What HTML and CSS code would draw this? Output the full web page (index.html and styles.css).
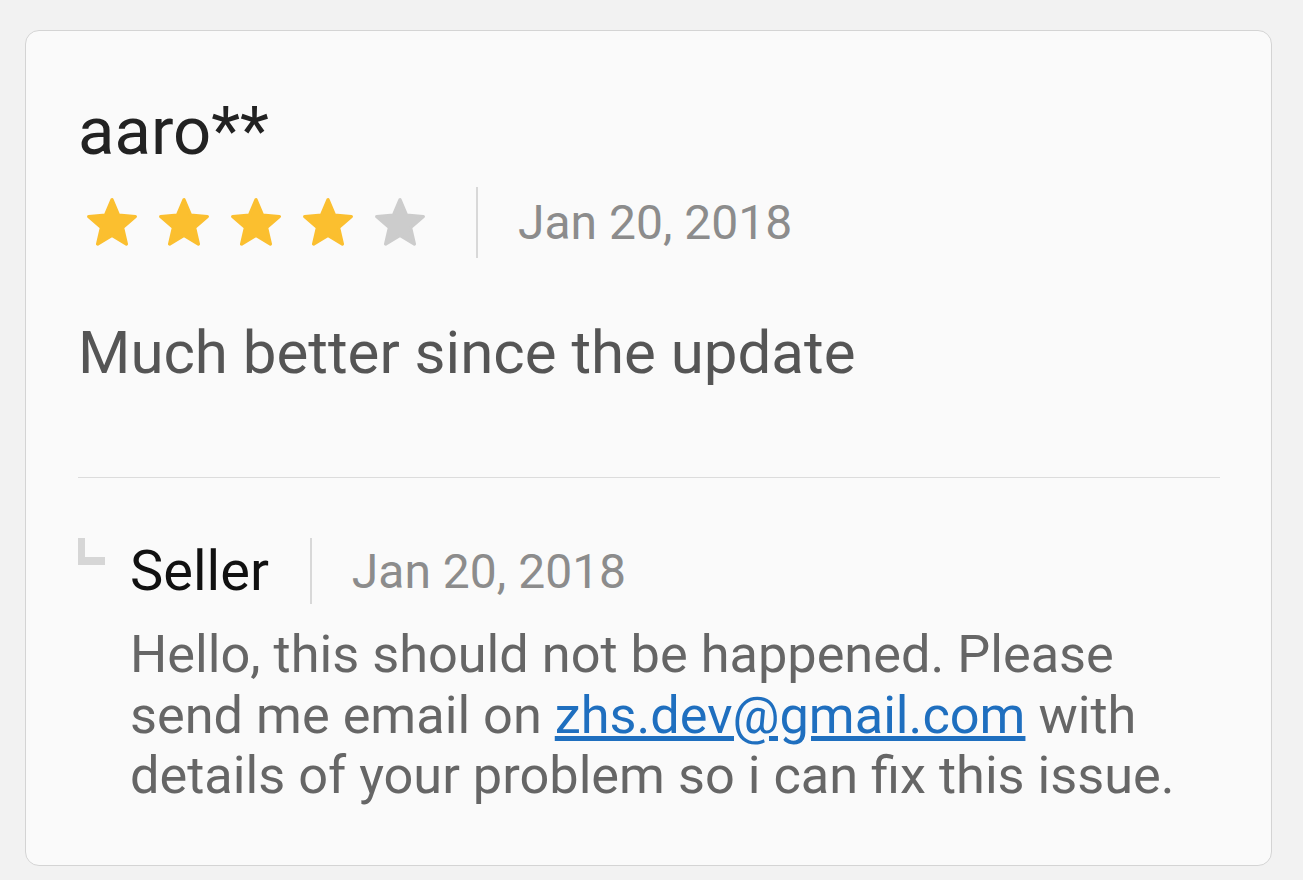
FILE: index.html
```html
<!DOCTYPE html>
<html lang="en">
<head>
    <meta charset="UTF-8">
    <meta name="viewport" content="width=device-width, initial-scale=1.0">
    <title>Review</title>
    <link rel="stylesheet" href="styles.css">
</head>
<body>

    <!-- Review card -->
    <div class="card">
        <div class="review">
            <h1 class="name">aaro**</h1>
            <div class="meta">
                <div class="stars">
                    <svg class="star on" viewBox="0 0 24 24"><path d="M12 17.27L18.18 21l-1.64-7.03L22 9.24l-7.19-.61L12 2 9.19 8.63 2 9.24l5.46 4.73L5.82 21z"/></svg>
                    <svg class="star on" viewBox="0 0 24 24"><path d="M12 17.27L18.18 21l-1.64-7.03L22 9.24l-7.19-.61L12 2 9.19 8.63 2 9.24l5.46 4.73L5.82 21z"/></svg>
                    <svg class="star on" viewBox="0 0 24 24"><path d="M12 17.27L18.18 21l-1.64-7.03L22 9.24l-7.19-.61L12 2 9.19 8.63 2 9.24l5.46 4.73L5.82 21z"/></svg>
                    <svg class="star on" viewBox="0 0 24 24"><path d="M12 17.27L18.18 21l-1.64-7.03L22 9.24l-7.19-.61L12 2 9.19 8.63 2 9.24l5.46 4.73L5.82 21z"/></svg>
                    <svg class="star" viewBox="0 0 24 24"><path d="M12 17.27L18.18 21l-1.64-7.03L22 9.24l-7.19-.61L12 2 9.19 8.63 2 9.24l5.46 4.73L5.82 21z"/></svg>
                </div>
                <span class="sep"></span>
                <span class="date">Jan 20, 2018</span>
            </div>
            <p class="body">Much better since the update</p>
        </div>

        <!-- Seller reply -->
        <div class="reply">
            <span class="reply-mark"></span>
            <div class="reply-content">
                <div class="reply-head">
                    <span class="seller">Seller</span>
                    <span class="sep small"></span>
                    <span class="date">Jan 20, 2018</span>
                </div>
                <p class="reply-text">Hello, this should not be happened. Please send me email on <a href="#">zhs.dev@gmail.com</a> with details of your problem so i can fix this issue.</p>
            </div>
        </div>
    </div>

</body>
</html>
```

FILE: styles.css
```css
/* General styles */
body {
    font-family: Roboto, "Noto Sans", sans-serif;
    margin: 0;
    padding: 30px 31px 0 25px;
    background-color: #f2f2f2;
}

.card {
    height: 836px;
    box-sizing: border-box;
    background-color: #fafafa;
    border: 1px solid #d4d4d4;
    border-radius: 14px;
    padding: 0 51px 0 52px;
}

/* Review */
.review {
    padding-top: 65px;
    padding-bottom: 89px;
    border-bottom: 1px solid #dcdcdc;
}

.name {
    margin: 0;
    font-size: 67px;
    font-weight: 400;
    line-height: 70px;
    color: #222;
}

.meta {
    display: flex;
    align-items: center;
    margin-top: 21px;
    height: 71px;
}

.stars {
    display: flex;
    gap: 16px;
    padding-left: 6px;
}

.star {
    width: 56px;
    height: 56px;
    fill: #cccccc;
    stroke: #cccccc;
    stroke-width: 1.4;
    stroke-linejoin: round;
}

.star.on {
    fill: #fbbf2f;
    stroke: #fbbf2f;
}

.sep {
    width: 2px;
    height: 71px;
    background-color: #d8d8d8;
    margin: 0 40px 0 48px;
}

.date {
    font-size: 48px;
    color: #8c8c8c;
}

.body {
    margin: 60px 0 0;
    font-size: 60px;
    line-height: 70px;
    color: #555;
}

/* Reply */
.reply {
    display: flex;
    padding-top: 60px;
}

.reply-mark {
    width: 27px;
    height: 27px;
    box-sizing: border-box;
    border-left: 7px solid #d6d6d6;
    border-bottom: 8px solid #d6d6d6;
    margin-right: 25px;
    flex-shrink: 0;
}

.reply-content {
    flex: 1;
}

.reply-head {
    display: flex;
    align-items: center;
    height: 66px;
}

.seller {
    font-size: 56px;
    color: #111;
}

.sep.small {
    height: 66px;
    margin: 0 40px 0 41px;
}

.reply-text {
    margin: 20px 0 0;
    font-size: 52.3px;
    line-height: 60.5px;
    color: #666;
}

.reply-text a {
    color: #1f6fbf;
}
```
